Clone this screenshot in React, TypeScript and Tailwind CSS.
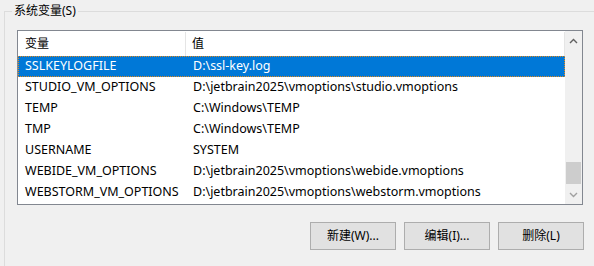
import React from "react";

type Row = { name: string; value: string };

const rows: Row[] = [
  { name: "SSLKEYLOGFILE", value: "D:\\ssl-key.log" },
  { name: "STUDIO_VM_OPTIONS", value: "D:\\jetbrain2025\\vmoptions\\studio.vmoptions" },
  { name: "TEMP", value: "C:\\Windows\\TEMP" },
  { name: "TMP", value: "C:\\Windows\\TEMP" },
  { name: "USERNAME", value: "SYSTEM" },
  { name: "WEBIDE_VM_OPTIONS", value: "D:\\jetbrain2025\\vmoptions\\webide.vmoptions" },
  { name: "WEBSTORM_VM_OPTIONS", value: "D:\\jetbrain2025\\vmoptions\\webstorm.vmoptions" },
];

const font = "font-['Segoe_UI','Noto_Sans','Noto_Sans_CJK_SC',sans-serif]";

function ScrollBar() {
  return (
    <div className="flex w-[17px] shrink-0 flex-col bg-[#f0f0f0]">
      <div className="flex h-[17px] items-center justify-center pt-[3px]">
        <svg width="9" height="6" viewBox="0 0 9 6">
          <path d="M1 5 L4.5 1.5 L8 5" fill="none" stroke="#606060" strokeWidth="1.4" />
        </svg>
      </div>
      <div className="flex-1 flex flex-col justify-end pb-[3px]">
        <div className="mx-[1px] h-[22px] bg-[#cdcdcd]" />
      </div>
      <div className="flex h-[17px] items-center justify-center pb-[2px]">
        <svg width="9" height="6" viewBox="0 0 9 6">
          <path d="M1 1 L4.5 4.5 L8 1" fill="none" stroke="#a0a0a0" strokeWidth="1.4" />
        </svg>
      </div>
    </div>
  );
}

function ListView() {
  return (
    <div className="ml-[12px] mt-[18px] flex h-[175px] w-[566px] border border-[#828790] bg-white">
      <div className="flex w-[548px] flex-col">
        <div className="flex h-[25px] pt-[1px] text-[12px] text-black">
          <div className="flex w-[168px] items-center border-r border-[#e5e5e5] pl-[7px]">变量</div>
          <div className="flex flex-1 items-center border-r border-[#e5e5e5] pl-[6px]">值</div>
        </div>
        {rows.map((r, i) => (
          <div
            key={r.name}
            className={
              i === 0
                ? "flex h-[21px] items-center border border-dotted border-[#e0891e] bg-[#0078d7] text-[12.5px] text-white"
                : "flex h-[21px] items-center border border-transparent text-[12.5px] text-black"
            }
          >
            <div className="w-[168px] pl-[6px]">{r.name}</div>
            <div className="pl-[6px]">{r.value}</div>
          </div>
        ))}
      </div>
      <ScrollBar />
    </div>
  );
}

function Button({ label }: { label: string }) {
  return (
    <button className="h-[28px] w-[86px] border border-[#adadad] bg-[#e1e1e1] text-[12px] text-black">
      {label}
    </button>
  );
}

export default function App() {
  return (
    <div className={`relative h-[266px] w-[594px] overflow-hidden bg-[#f0f0f0] ${font}`}>
      <div className="pl-[4px] pt-[11px]">
        <div className="relative h-[260px] w-[620px] border-l border-t border-[#dcdcdc]">
          <span className="absolute left-[7px] top-[-9px] bg-[#f0f0f0] px-[2px] text-[12px] leading-[16px] text-black">
            系统变量(S)
          </span>
          <ListView />
          <div className="mt-[17px] flex w-[579px] justify-end gap-[8px]">
            <Button label="新建(W)..." />
            <Button label="编辑(I)..." />
            <Button label="删除(L)" />
          </div>
        </div>
      </div>
    </div>
  );
}
